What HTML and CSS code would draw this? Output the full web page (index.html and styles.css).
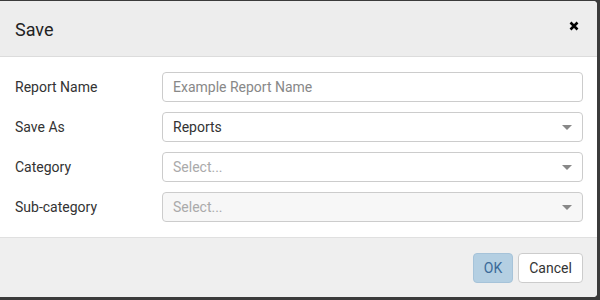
FILE: index.html
```html
<!DOCTYPE html>
<html>
<head>
<meta charset="utf-8">
<link rel="stylesheet" href="styles.css">
</head>
<body>
<div class="modal">
  <div class="modal-header">
    <h1 class="title">Save</h1>
    <button class="close" aria-label="Close">
      <svg width="10" height="10" viewBox="0 0 10 10"><path d="M1.5 1.5 L8.5 8.5 M8.5 1.5 L1.5 8.5" stroke="#000" stroke-width="2.6" stroke-linecap="butt"/></svg>
    </button>
  </div>
  <div class="modal-body">
    <div class="row">
      <label class="label">Report Name</label>
      <input class="control" type="text" placeholder="Example Report Name">
    </div>
    <div class="row">
      <label class="label">Save As</label>
      <div class="control select"><span class="value">Reports</span><span class="caret"></span></div>
    </div>
    <div class="row">
      <label class="label">Category</label>
      <div class="control select"><span class="placeholder">Select...</span><span class="caret"></span></div>
    </div>
    <div class="row">
      <label class="label">Sub-category</label>
      <div class="control select disabled"><span class="placeholder">Select...</span><span class="caret"></span></div>
    </div>
  </div>
  <div class="modal-footer">
    <button class="btn btn-primary">OK</button>
    <button class="btn btn-default">Cancel</button>
  </div>
</div>
</body>
</html>
```
FILE: styles.css
```css
* { box-sizing: border-box; }
html, body { margin: 0; height: 100%; }
body {
  background: #3b3b3b;
  padding: 1px 3px 3px 0;
  font-family: Roboto, "Liberation Sans", sans-serif;
  color: #333;
}
.modal {
  background: #fff;
  border-radius: 0 4px 4px 0;
  height: 296px;
  display: flex;
  flex-direction: column;
  overflow: hidden;
}
.modal-header {
  background: #ededed;
  border-bottom: 1px solid #dcdcdc;
  height: 56px;
  display: flex;
  align-items: center;
  justify-content: space-between;
  padding: 0 18px 0 15px;
}
.title {
  margin: 0;
  font-size: 18px;
  font-weight: 400;
  color: #222;
  position: relative;
  top: 1px;
}
.close {
  border: 0;
  background: none;
  padding: 0;
  display: flex;
  position: relative;
  top: -3px;
}
.modal-body {
  padding: 15px 14px 15px 15px;
  display: flex;
  flex-direction: column;
  gap: 10px;
  flex: none;
}
.row {
  display: flex;
  align-items: center;
  height: 30px;
}
.label {
  width: 147px;
  font-size: 14px;
  color: #333;
}
.control {
  flex: 1;
  height: 30px;
  border: 1px solid #ccc;
  border-radius: 4px;
  background: #fff;
  font-family: inherit;
  font-size: 14px;
  padding: 0 10px;
  color: #333;
  outline: none;
}
.control::placeholder { color: #888; }
.select {
  display: flex;
  align-items: center;
  justify-content: space-between;
}
.placeholder { color: #aaa; }
.select.disabled { background: #f7f7f7; }
.caret {
  width: 0;
  height: 0;
  border-left: 5px solid transparent;
  border-right: 5px solid transparent;
  border-top: 5px solid #888;
  margin-right: 0;
}
.modal-footer {
  flex: 1;
  background: #efefef;
  border-top: 1px solid #e0e0e0;
  display: flex;
  justify-content: flex-end;
  align-items: flex-start;
  gap: 5px;
  padding: 15px 14px 0 0;
}
.btn {
  height: 30px;
  font-family: inherit;
  font-size: 14px;
  border-radius: 4px;
  padding: 0;
  border: 1px solid;
}
.btn-primary {
  background: #b4cfe2;
  border-color: #a6c3d9;
  color: #3b6a99;
  width: 40px;
}
.btn-default {
  background: #fff;
  border-color: #ccc;
  color: #333;
  width: 65px;
}
```
